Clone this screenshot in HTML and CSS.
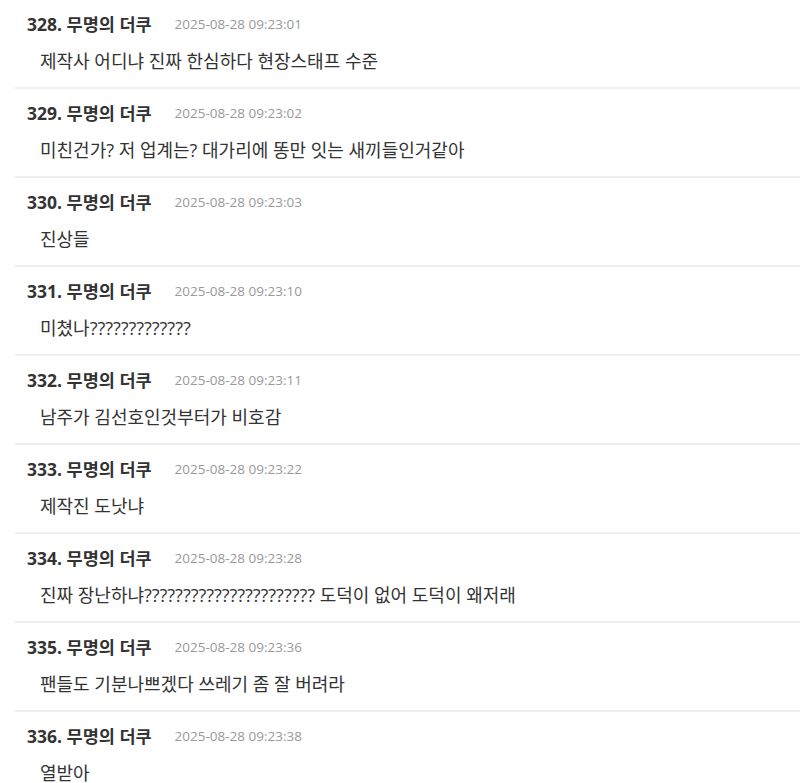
FILE: index.html
```html
<!DOCTYPE html>
<html lang="ko">
<head>
<meta charset="utf-8">
<title>댓글</title>
<link rel="stylesheet" href="styles.css">
</head>
<body>
    <ul class="comments">
        <li class="comment">
            <div class="comment-head"><span class="author">328. 무명의 더쿠</span><span class="date">2025-08-28 09:23:01</span></div>
            <div class="comment-body">제작사 어디냐 진짜 한심하다 현장스태프 수준</div>
        </li>
        <li class="comment">
            <div class="comment-head"><span class="author">329. 무명의 더쿠</span><span class="date">2025-08-28 09:23:02</span></div>
            <div class="comment-body">미친건가? 저 업계는? 대가리에 똥만 잇는 새끼들인거같아</div>
        </li>
        <li class="comment">
            <div class="comment-head"><span class="author">330. 무명의 더쿠</span><span class="date">2025-08-28 09:23:03</span></div>
            <div class="comment-body">진상들</div>
        </li>
        <li class="comment">
            <div class="comment-head"><span class="author">331. 무명의 더쿠</span><span class="date">2025-08-28 09:23:10</span></div>
            <div class="comment-body">미쳤나?????????????</div>
        </li>
        <li class="comment">
            <div class="comment-head"><span class="author">332. 무명의 더쿠</span><span class="date">2025-08-28 09:23:11</span></div>
            <div class="comment-body">남주가 김선호인것부터가 비호감</div>
        </li>
        <li class="comment">
            <div class="comment-head"><span class="author">333. 무명의 더쿠</span><span class="date">2025-08-28 09:23:22</span></div>
            <div class="comment-body">제작진 도낫냐</div>
        </li>
        <li class="comment">
            <div class="comment-head"><span class="author">334. 무명의 더쿠</span><span class="date">2025-08-28 09:23:28</span></div>
            <div class="comment-body">진짜 장난하냐?????????????????????? 도덕이 없어 도덕이 왜저래</div>
        </li>
        <li class="comment">
            <div class="comment-head"><span class="author">335. 무명의 더쿠</span><span class="date">2025-08-28 09:23:36</span></div>
            <div class="comment-body">팬들도 기분나쁘겠다 쓰레기 좀 잘 버려라</div>
        </li>
        <li class="comment">
            <div class="comment-head"><span class="author">336. 무명의 더쿠</span><span class="date">2025-08-28 09:23:38</span></div>
            <div class="comment-body">열받아</div>
        </li>
    </ul>
</body>
</html>
```

FILE: styles.css
```css
/**
 * Generic styles
 */
* {
    box-sizing: border-box;
}
body {
    margin: 0;
    background: #fff;
    color: #333;
    font-family: "Open Sans", "Noto Sans CJK KR", sans-serif;
}

/**
 * Comment list
 */
.comments {
    list-style: none;
    margin: 0 0 0 15px;
    padding: 0;
}
.comment {
    padding: 12px 0 14px 12px;
    border-bottom: 2px solid #eee;
}
.comment-head {
    display: flex;
    align-items: center;
    gap: 23px;
    height: 24px;
    line-height: 24px;
}
.author {
    font-size: 17.5px;
    font-weight: 700;
    color: #333;
}
.date {
    font-size: 13.5px;
    color: #999;
}
.comment-body {
    margin-top: 13px;
    padding-left: 13px;
    height: 24px;
    font-size: 18px;
    line-height: 24px;
    color: #333;
}
```
